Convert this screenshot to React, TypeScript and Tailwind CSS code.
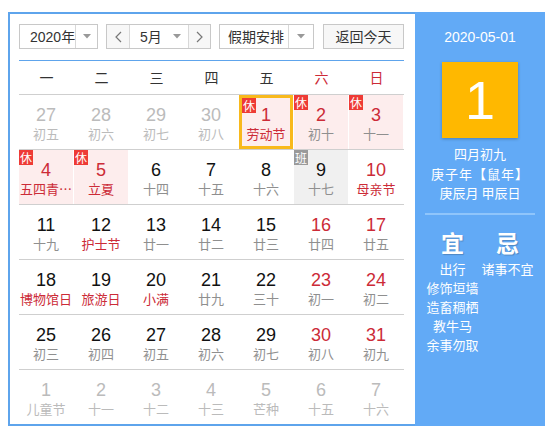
import React from "react";

type Cell = {
  d: string;
  l: string;
  out?: boolean;
  red?: boolean;
  lred?: boolean;
  rest?: boolean;
  work?: boolean;
  sel?: boolean;
};

const rows: Cell[][] = [
  [
    { d: "27", l: "初五", out: true },
    { d: "28", l: "初六", out: true },
    { d: "29", l: "初七", out: true },
    { d: "30", l: "初八", out: true },
    { d: "1", l: "劳动节", red: true, lred: true, rest: true, sel: true },
    { d: "2", l: "初十", red: true, rest: true },
    { d: "3", l: "十一", red: true, rest: true },
  ],
  [
    { d: "4", l: "五四青…", red: true, lred: true, rest: true },
    { d: "5", l: "立夏", red: true, lred: true, rest: true },
    { d: "6", l: "十四" },
    { d: "7", l: "十五" },
    { d: "8", l: "十六" },
    { d: "9", l: "十七", work: true },
    { d: "10", l: "母亲节", red: true, lred: true },
  ],
  [
    { d: "11", l: "十九" },
    { d: "12", l: "护士节", lred: true },
    { d: "13", l: "廿一" },
    { d: "14", l: "廿二" },
    { d: "15", l: "廿三" },
    { d: "16", l: "廿四", red: true },
    { d: "17", l: "廿五", red: true },
  ],
  [
    { d: "18", l: "博物馆日", lred: true },
    { d: "19", l: "旅游日", lred: true },
    { d: "20", l: "小满", lred: true },
    { d: "21", l: "廿九" },
    { d: "22", l: "三十" },
    { d: "23", l: "初一", red: true },
    { d: "24", l: "初二", red: true },
  ],
  [
    { d: "25", l: "初三" },
    { d: "26", l: "初四" },
    { d: "27", l: "初五" },
    { d: "28", l: "初六" },
    { d: "29", l: "初七" },
    { d: "30", l: "初八", red: true },
    { d: "31", l: "初九", red: true },
  ],
  [
    { d: "1", l: "儿童节", out: true },
    { d: "2", l: "十一", out: true },
    { d: "3", l: "十二", out: true },
    { d: "4", l: "十三", out: true },
    { d: "5", l: "芒种", out: true },
    { d: "6", l: "十五", out: true },
    { d: "7", l: "十六", out: true },
  ],
];

const weekdays = ["一", "二", "三", "四", "五", "六", "日"];

function Caret() {
  return (
    <svg width="8" height="5" viewBox="0 0 8 5">
      <path d="M0 0 L8 0 L4 4.5 Z" fill="#999" />
    </svg>
  );
}

function Chevron({ dir }: { dir: "l" | "r" }) {
  return (
    <svg width="7" height="12" viewBox="0 0 7 12">
      <path
        d={dir === "l" ? "M6 1 L1 6 L6 11" : "M1 1 L6 6 L1 11"}
        fill="none"
        stroke="#777"
        strokeWidth="1.2"
      />
    </svg>
  );
}

function DayCell({ c }: { c: Cell }) {
  let bg = "bg-white";
  if (c.rest) bg = "bg-[#fdeded]";
  if (c.work) bg = "bg-[#f0f0f0]";
  let num = "text-[#111]";
  if (c.red) num = "text-[#cc2b37]";
  if (c.out) num = "text-[#bbbbbb]";
  let lun = "text-[#8f8f8f]";
  if (c.lred) lun = "text-[#cc2b37]";
  if (c.out) lun = "text-[#bbbbbb]";
  return (
    <div className="w-[55px] h-[54px]">
      <div
        className={`relative w-[54px] h-[54px] flex flex-col items-center ${bg} ${
          c.sel ? "border-[3px] border-[#f8b91c] pt-[7px]" : "pt-[10px]"
        }`}
      >
        {c.rest && (
          <div className="absolute top-0 left-0 w-[14px] h-[15px] bg-[#ee3b35] text-white text-[12px] leading-[15px] text-center">
            休
          </div>
        )}
        {c.work && (
          <div className="absolute top-0 left-0 w-[14px] h-[15px] bg-[#9a9a9a] text-white text-[12px] leading-[15px] text-center">
            班
          </div>
        )}
        <div
          className={`text-[18px] leading-[20px] ${num}`}
          style={{ fontFamily: '"Liberation Sans", Arial, sans-serif' }}
        >
          {c.d}
        </div>
        <div className={`text-[13px] leading-[17px] whitespace-nowrap ${lun}`}>{c.l}</div>
      </div>
    </div>
  );
}

export default function App() {
  return (
    <div
      className="w-[551px] h-[434px] bg-white pt-[12px] pl-[8px]"
      style={{ fontFamily: '"Noto Sans CJK SC", "Liberation Sans", sans-serif' }}
    >
      <div className="w-[537px] h-[414px] border-2 border-[#5ea4ec] flex">
        {/* Left calendar */}
        <div className="w-[405px] h-[410px] pl-[9px] pt-[10px]">
          <div className="flex items-center h-[25px] text-[14px] text-[#333] whitespace-nowrap">
            <div className="w-[79px] h-[25px] border border-[#c8c8c8] flex">
              <div className="flex-1 pl-[10px] leading-[23px]">
                <span style={{ fontFamily: '"Liberation Sans", Arial, sans-serif' }}>2020</span>年
              </div>
              <div className="w-[24px] border-l border-[#d8d8d8] flex items-center justify-center">
                <Caret />
              </div>
            </div>
            <div className="ml-[8px] w-[105px] h-[25px] border border-[#c8c8c8] flex">
              <div className="w-[23px] bg-[#f7f7f7] flex items-center justify-center border-r border-[#d8d8d8]">
                <Chevron dir="l" />
              </div>
              <div className="flex-1 flex items-center pl-[10px] pr-[7px] justify-between leading-[23px]">
                <span>
                  <span style={{ fontFamily: '"Liberation Sans", Arial, sans-serif' }}>5</span>月
                </span>
                <Caret />
              </div>
              <div className="w-[22px] bg-[#f7f7f7] flex items-center justify-center border-l border-[#d8d8d8]">
                <Chevron dir="r" />
              </div>
            </div>
            <div className="ml-[8px] w-[95px] h-[25px] border border-[#c8c8c8] flex">
              <div className="flex-1 pl-[8px] leading-[23px]">假期安排</div>
              <div className="w-[25px] border-l border-[#d8d8d8] flex items-center justify-center">
                <Caret />
              </div>
            </div>
            <div className="ml-[9px] w-[81px] h-[25px] border border-[#c8c8c8] bg-[#f7f7f7] text-center leading-[23px]">
              返回今天
            </div>
          </div>
          <div className="mt-[11px] w-[385px] h-px bg-[#5ea4ec]" />
          <div className="flex w-[385px] h-[33px] items-center text-[14px]">
            {weekdays.map((w, i) => (
              <div
                key={w}
                className={`w-[55px] text-center ${i >= 5 ? "text-[#cc2b37]" : "text-[#333]"}`}
              >
                {w}
              </div>
            ))}
          </div>
          {rows.map((r, ri) => (
            <div key={ri} className="flex w-[385px] h-[55px] border-t border-[#cfcfcf]">
              {r.map((c, ci) => (
                <DayCell key={ci} c={c} />
              ))}
            </div>
          ))}
        </div>
        {/* Right panel */}
        <div className="flex-1 -mt-[2px] -mr-[2px] -mb-[2px] bg-[#62aaf6] px-[10px] pt-[15px] text-white flex flex-col items-center">
          <div
            className="text-[14px] leading-[20px]"
            style={{ fontFamily: '"Liberation Sans", Arial, sans-serif' }}
          >
            2020-05-01
          </div>
          <div
            className="mt-[15px] w-[76px] h-[76px] bg-[#ffb800] shadow-[0_1px_3px_rgba(0,0,0,0.25)] flex items-center justify-center text-[54px] leading-none"
            style={{ fontFamily: '"Liberation Sans", Arial, sans-serif' }}
          >
            1
          </div>
          <div className="mt-[6px] text-[13px] leading-[19.5px] text-center whitespace-nowrap">
            <div>四月初九</div>
            <div className="tracking-[1px]">庚子年【鼠年】</div>
            <div>庚辰月 甲辰日</div>
          </div>
          <div className="mt-[10px] w-[110px] h-[2px] bg-[#8fc5fb]" />
          <div className="mt-[12px] w-[110px] flex">
            <div className="w-[55px] flex flex-col items-center">
              <div className="text-[23px] leading-[30px] font-bold [text-shadow:1px_1px_1px_rgba(0,0,0,0.2)]">
                宜
              </div>
              <div className="mt-[2px] text-[13px] leading-[19px] text-center whitespace-nowrap">
                <div>出行</div>
                <div>修饰垣墙</div>
                <div>造畜稠栖</div>
                <div>教牛马</div>
                <div>余事勿取</div>
              </div>
            </div>
            <div className="w-[55px] flex flex-col items-center">
              <div className="text-[23px] leading-[30px] font-bold [text-shadow:1px_1px_1px_rgba(0,0,0,0.2)]">
                忌
              </div>
              <div className="mt-[2px] text-[13px] leading-[19px] text-center whitespace-nowrap">
                <div>诸事不宜</div>
              </div>
            </div>
          </div>
        </div>
      </div>
    </div>
  );
}
